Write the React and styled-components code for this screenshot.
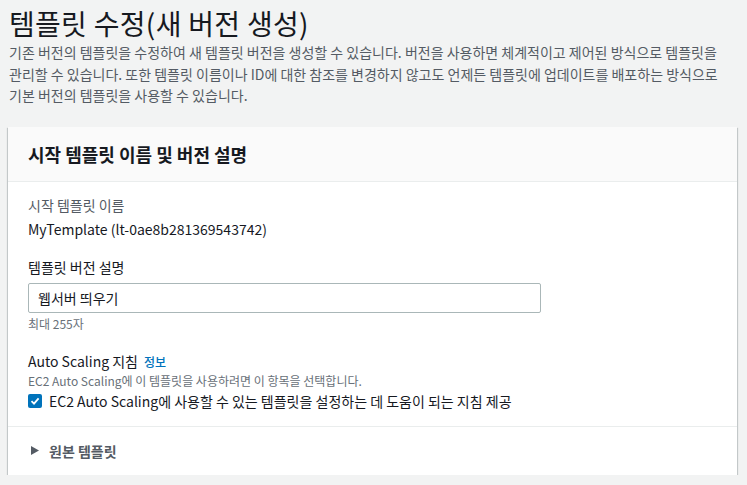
import React from "react";
import styled, { createGlobalStyle } from "styled-components";

const GlobalStyle = createGlobalStyle`
  html, body { margin: 0; padding: 0; }
  body {
    background: #f2f3f3;
    font-family: "Noto Sans CJK KR", "Noto Sans", "Open Sans", sans-serif;
    color: #16191f;
    -webkit-font-smoothing: antialiased;
  }
`;

const Page = styled.div`
  padding: 4px 10px 0 8px;
`;

const Title = styled.h1`
  margin: 0;
  padding-left: 1px;
  font-size: 28px;
  font-weight: 400;
  line-height: 38px;
  letter-spacing: 0.3px;
  color: #16191f;
`;

const Description = styled.p`
  margin: 0;
  padding-left: 1px;
  font-size: 14px;
  line-height: 21.5px;
  color: #545b64;
  white-space: nowrap;
`;

const Card = styled.section`
  margin-top: 20px;
  background: #fff;
  box-shadow: 0 1px 1px 0 rgba(0, 28, 36, 0.3), 1px 1px 1px 0 rgba(0, 28, 36, 0.15),
    -1px 1px 1px 0 rgba(0, 28, 36, 0.15);
`;

const CardHeader = styled.header`
  height: 54px;
  display: flex;
  align-items: center;
  padding: 0 20px;
  background: #fafafa;
  border-bottom: 1px solid #eaeded;
`;

const CardTitle = styled.h2`
  margin: 0;
  font-size: 18px;
  font-weight: 700;
  color: #16191f;
`;

const CardBody = styled.div`
  padding: 12px 20px 14px;
  display: flex;
  flex-direction: column;
`;

const Field = styled.div`
  display: flex;
  flex-direction: column;
  margin-top: ${(p) => p.$gap || 0}px;
`;

const Label = styled.div`
  font-size: 14px;
  line-height: 22px;
  color: ${(p) => (p.$muted ? "#545b64" : "#16191f")};
  display: flex;
  align-items: baseline;
  gap: 6px;
`;

const Value = styled.div`
  font-size: 14px;
  line-height: 22px;
  margin-top: 2px;
  color: #16191f;
`;

const InfoLink = styled.span`
  font-size: 12px;
  font-weight: 500;
  color: #0073bb;
`;

const Input = styled.input`
  box-sizing: border-box;
  width: 513px;
  height: 30px;
  margin-top: 5px;
  padding: 0 9px;
  border: 1px solid #aab7b8;
  border-radius: 2px;
  font-family: inherit;
  font-size: 14px;
  color: #16191f;
  background: #fff;
  outline: none;
`;

const Hint = styled.div`
  font-size: 12px;
  line-height: 16px;
  margin-top: ${(p) => p.$top || 0}px;
  color: #687078;
`;

const CheckRow = styled.label`
  display: flex;
  align-items: center;
  gap: 7px;
  margin-top: 1px;
  font-size: 14px;
  line-height: 22px;
  color: #16191f;
`;

const CheckBox = styled.span`
  width: 14px;
  height: 14px;
  border-radius: 2px;
  background: #0073bb;
  display: inline-flex;
  align-items: center;
  justify-content: center;
  flex: none;
`;

const Expander = styled.div`
  border-top: 1px solid #eaeded;
  height: 48px;
  padding: 0 20px 0 23px;
  display: flex;
  align-items: center;
  gap: 10px;
  font-size: 14px;
  font-weight: 700;
  color: #545b64;
`;

const Caret = styled.svg`
  width: 8px;
  height: 9px;
  flex: none;
`;

export default function App() {
  return (
    <>
      <GlobalStyle />
      <Page>
        <Title>템플릿 수정(새 버전 생성)</Title>
        <Description>
          기존 버전의 템플릿을 수정하여 새 템플릿 버전을 생성할 수 있습니다. 버전을 사용하면 체계적이고 제어된 방식으로 템플릿을
          <br />
          관리할 수 있습니다. 또한 템플릿 이름이나 ID에 대한 참조를 변경하지 않고도 언제든 템플릿에 업데이트를 배포하는 방식으로
          <br />
          기본 버전의 템플릿을 사용할 수 있습니다.
        </Description>
        <Card>
          <CardHeader>
            <CardTitle>시작 템플릿 이름 및 버전 설명</CardTitle>
          </CardHeader>
          <CardBody>
            <Field>
              <Label $muted>시작 템플릿 이름</Label>
              <Value>MyTemplate (lt-0ae8b281369543742)</Value>
            </Field>
            <Field $gap={16}>
              <Label>템플릿 버전 설명</Label>
              <Input defaultValue="웹서버 띄우기" />
              <Hint $top={3}>최대 255자</Hint>
            </Field>
            <Field $gap={18}>
              <Label>
                Auto Scaling 지침 <InfoLink>정보</InfoLink>
              </Label>
              <Hint>EC2 Auto Scaling에 이 템플릿을 사용하려면 이 항목을 선택합니다.</Hint>
              <CheckRow>
                <CheckBox>
                  <svg width="10" height="10" viewBox="0 0 10 10">
                    <path d="M1.5 5.2 L4 7.6 L8.6 2.4" fill="none" stroke="#fff" strokeWidth="1.8" />
                  </svg>
                </CheckBox>
                EC2 Auto Scaling에 사용할 수 있는 템플릿을 설정하는 데 도움이 되는 지침 제공
              </CheckRow>
            </Field>
          </CardBody>
          <Expander>
            <Caret viewBox="0 0 8 9">
              <path d="M0 0 L8 4.5 L0 9 Z" fill="#545b64" />
            </Caret>
            원본 템플릿
          </Expander>
        </Card>
      </Page>
    </>
  );
}
